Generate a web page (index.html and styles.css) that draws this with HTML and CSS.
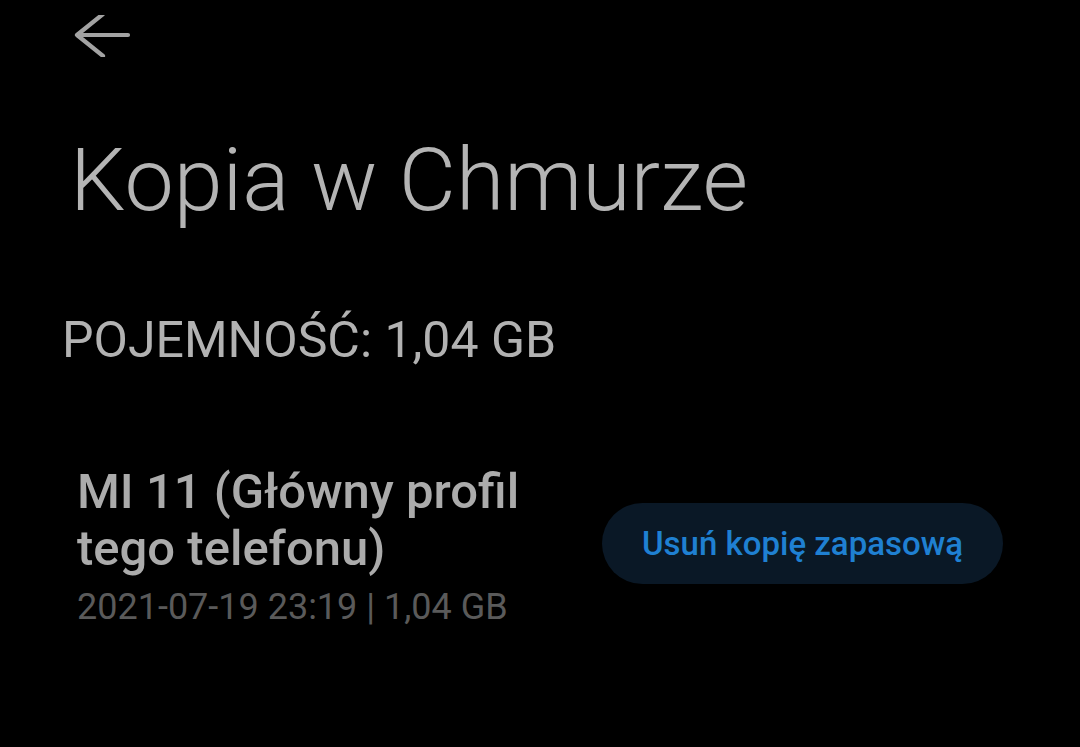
FILE: index.html
```html
<!DOCTYPE html>
<html lang="pl">
<head>
<meta charset="utf-8">
<title>Kopia w Chmurze</title>
<link rel="stylesheet" href="styles.css">
</head>
<body>
<div class="screen">
  <div class="topbar">
    <svg class="back" width="58" height="42" viewBox="0 0 58 42" aria-hidden="true">
      <path d="M3 20 H54 M3 20 L29 -1 M3 20 L29 41" fill="none" stroke="#a3a3a3" stroke-width="4.2" stroke-linecap="round" stroke-linejoin="round"/>
    </svg>
  </div>
  <h1 class="title">Kopia w Chmurze</h1>
  <div class="capacity">POJEMNOŚĆ: 1,04 GB</div>
  <div class="row">
    <div class="info">
      <div class="name">MI 11 (Główny profil tego telefonu)</div>
      <div class="meta">2021-07-19 23:19 | 1,04 GB</div>
    </div>
    <button class="delete">Usuń kopię zapasową</button>
  </div>
</div>
</body>
</html>
```
FILE: styles.css
```css
html, body {
  margin: 0;
  padding: 0;
  background: #000;
}
body {
  font-family: Roboto, "Noto Sans", sans-serif;
  width: 1080px;
  height: 747px;
  overflow: hidden;
}
.screen {
  display: flex;
  flex-direction: column;
}
.topbar {
  height: 70px;
  padding: 15px 0 0 74px;
  box-sizing: border-box;
}
.back {
  display: block;
}
.title {
  margin: 60px 0 0 0;
  padding-left: 70px;
  font-size: 88px;
  line-height: 100px;
  font-weight: 300;
  color: #b4b4b4;
}
.capacity {
  margin-top: 80px;
  padding-left: 62px;
  font-size: 50px;
  line-height: 60px;
  font-weight: 400;
  color: #b2b2b2;
}
.row {
  margin-top: 93px;
  display: flex;
  align-items: center;
  padding-left: 77px;
}
.info {
  width: 500px;
}
.name {
  font-size: 49px;
  line-height: 57px;
  font-weight: 500;
  color: #ababab;
}
.meta {
  margin-top: 8px;
  font-size: 36px;
  line-height: 44px;
  color: #5a5a5a;
}
.delete {
  margin-left: 25px;
  margin-bottom: 6px;
  width: 401px;
  height: 81px;
  border: none;
  border-radius: 41px;
  background: #0a1826;
  color: #1f80d2;
  font-family: Roboto, "Noto Sans", sans-serif;
  font-size: 33px;
  font-weight: 500;
  padding: 0;
}
```
